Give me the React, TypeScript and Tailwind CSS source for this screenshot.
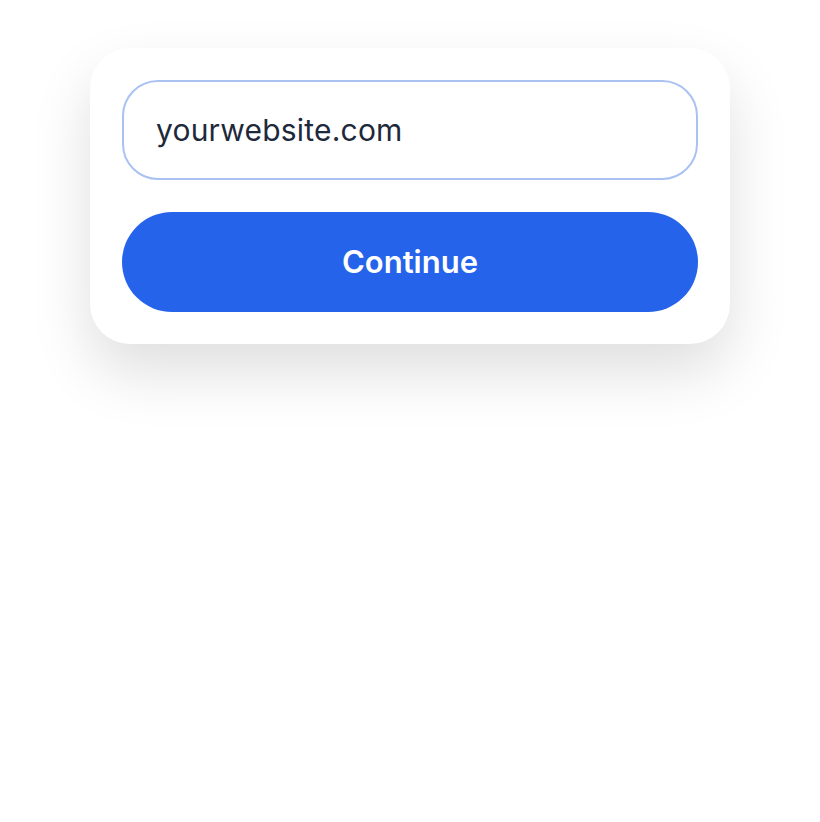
export default function App() {
  return (
    <div className="min-h-screen bg-white pt-12" style={{ fontFamily: 'Inter, "Noto Sans", sans-serif' }}>
      <div className="mx-auto flex w-[640px] flex-col gap-8 rounded-[40px] bg-white p-8 shadow-[0_28px_60px_rgba(0,0,0,0.13)]">
        <input
          type="text"
          defaultValue="yourwebsite.com"
          className="h-[100px] w-full rounded-[36px] border-2 border-[#a9c2f2] bg-white px-8 text-[30px] tracking-[0.2px] text-[#1e293b] outline-none"
        />
        <button className="h-[100px] w-full rounded-full bg-[#2563eb] text-[31px] font-semibold text-white">
          Continue
        </button>
      </div>
    </div>
  );
}
